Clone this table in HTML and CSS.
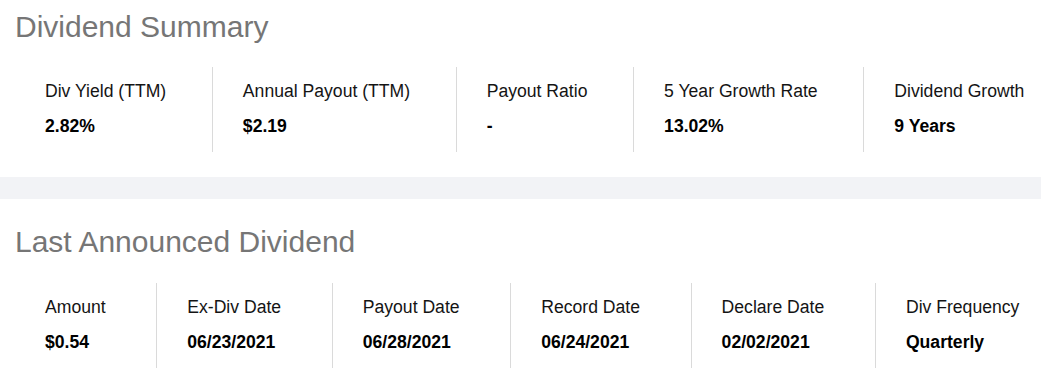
FILE: index.html
```html
<!DOCTYPE html>
<html lang="en">
<head>
<meta charset="utf-8">
<title>Dividend Summary</title>
<link rel="stylesheet" href="styles.css">
</head>
<body>
<div class="page">
  <section class="panel panel-first">
    <h2 class="panel-title">Dividend Summary</h2>
    <div class="stats">
      <div class="stat"><div class="stat-label">Div Yield (TTM)</div><div class="stat-value">2.82%</div></div>
      <div class="stat"><div class="stat-label">Annual Payout (TTM)</div><div class="stat-value">$2.19</div></div>
      <div class="stat"><div class="stat-label">Payout Ratio</div><div class="stat-value">-</div></div>
      <div class="stat"><div class="stat-label">5 Year Growth Rate</div><div class="stat-value">13.02%</div></div>
      <div class="stat"><div class="stat-label">Dividend Growth</div><div class="stat-value">9 Years</div></div>
    </div>
  </section>
  <div class="band"></div>
  <section class="panel panel-second">
    <h2 class="panel-title">Last Announced Dividend</h2>
    <div class="stats">
      <div class="stat"><div class="stat-label">Amount</div><div class="stat-value">$0.54</div></div>
      <div class="stat"><div class="stat-label">Ex-Div Date</div><div class="stat-value">06/23/2021</div></div>
      <div class="stat"><div class="stat-label">Payout Date</div><div class="stat-value">06/28/2021</div></div>
      <div class="stat"><div class="stat-label">Record Date</div><div class="stat-value">06/24/2021</div></div>
      <div class="stat"><div class="stat-label">Declare Date</div><div class="stat-value">02/02/2021</div></div>
      <div class="stat"><div class="stat-label">Div Frequency</div><div class="stat-value">Quarterly</div></div>
    </div>
  </section>
</div>
</body>
</html>
```
FILE: styles.css
```css
html, body {
  margin: 0;
  padding: 0;
  background: #ffffff;
  overflow: hidden;
}

body {
  font-family: "Liberation Sans", Arial, sans-serif;
  color: #111111;
}

.page {
  width: 1041px;
  overflow: hidden;
}

.panel {
  padding-left: 15px;
  width: 1055px;
}

.panel-first {
  padding-top: 9px;
  padding-bottom: 25px;
}

.panel-second {
  padding-top: 25px;
}

.panel-title {
  margin: 0 0 22px 0;
  font-size: 30px;
  line-height: 36px;
  font-weight: normal;
  color: #767676;
}

.panel-second .panel-title {
  margin-bottom: 23px;
}

.band {
  height: 22px;
  background: #f2f3f6;
}

.stats {
  display: flex;
}

.stat {
  flex: 1 1 auto;
  padding: 14px 0 16px 30px;
  white-space: nowrap;
}

.stat + .stat {
  border-left: 1px solid #dadada;
}

.stat-label {
  font-size: 17.6px;
  line-height: 20px;
  color: #141414;
}

.stat-value {
  margin-top: 15px;
  font-size: 17.6px;
  line-height: 20px;
  font-weight: bold;
  color: #000000;
}
```
